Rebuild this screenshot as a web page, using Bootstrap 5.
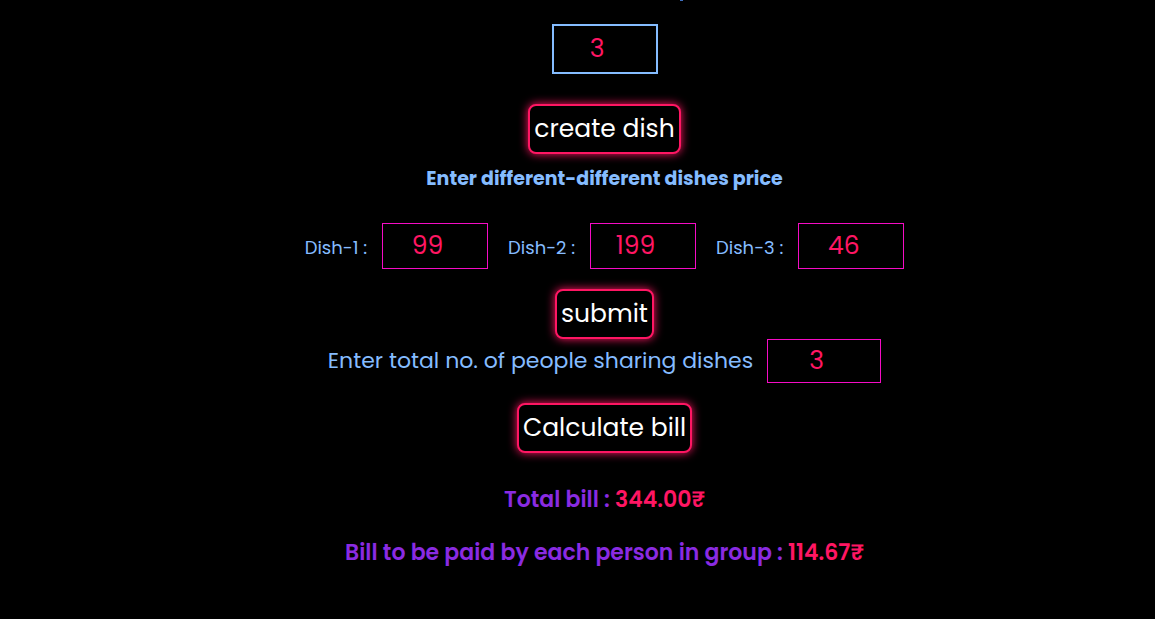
<!DOCTYPE html>
<html lang="en">
<head>
<meta charset="utf-8">
<meta name="viewport" content="width=device-width, initial-scale=1">
<title>Bill splitter</title>
<link href="https://cdn.jsdelivr.net/npm/bootstrap@5.3.0/dist/css/bootstrap.min.css" rel="stylesheet">
<style>
  body { background: #000; color: #85bcff; font-family: Poppins, Inter, "Open Sans", sans-serif; }
  .bill-page { padding: 24px 0 20px 54px; position: relative; }
  .bill-page::before { content: ""; position: absolute; top: 0; left: calc(50% + 102px); width: 3px; height: 1px; background: #3f6fc0; }
  .amount { background: #000; color: #ff1663; border: 1px solid #f50cc5; font-size: 25px; line-height: 40px; text-align: center; padding: 0; height: 46px; width: 106px; border-radius: 0; }
  .amount-count { border: 2px solid #85bcff; height: 50px; }
  .amount-people { width: 114px; height: 44px; }
  .glow-btn { background: #000; color: #fff; border: 2px solid #ff1663; border-radius: 8px; box-shadow: 0 0 10px #ff1663; font-size: 25px; line-height: 46px; padding: 0 4px; }
  .create-btn { margin-top: 30px; }
  .submit-btn, .calc-btn { margin-top: 20px; }
  .price-title { font-size: 19px; line-height: 29px; font-weight: 700; margin: 10px 0 30px; }
  .dish-label { font-size: 18px; line-height: 28px; padding-top: 3px; }
  .people-label { font-size: 22px; line-height: 32px; }
  .dish-row { gap: 20px; }
  .dish-pair { gap: 15px; }
  .people-pair { gap: 14px; }
  .result { color: #8a2be2; font-size: 22px; line-height: 33px; font-weight: 600; margin: 0 0 20px; }
  .results { margin-top: 30px; }
  .result output { color: #ff1663; }
</style>
</head>
<body>
<main class="bill-page d-flex flex-column align-items-center">
  <input type="number" class="amount amount-count" value="3" aria-label="Number of dishes">
  <button type="button" class="glow-btn create-btn">create dish</button>
  <h2 class="price-title">Enter different-different dishes price</h2>
  <div class="dish-row d-flex flex-wrap justify-content-center">
    <div class="dish-pair d-flex align-items-center"><label class="dish-label" for="d1">Dish-1 :</label><input id="d1" type="number" class="amount" value="99"></div>
    <div class="dish-pair d-flex align-items-center"><label class="dish-label" for="d2">Dish-2 :</label><input id="d2" type="number" class="amount" value="199"></div>
    <div class="dish-pair d-flex align-items-center"><label class="dish-label" for="d3">Dish-3 :</label><input id="d3" type="number" class="amount" value="46"></div>
  </div>
  <button type="button" class="glow-btn submit-btn">submit</button>
  <div class="people-pair d-flex align-items-center"><label class="people-label" for="people">Enter total no. of people sharing dishes</label><input id="people" type="number" class="amount amount-people" value="3"></div>
  <button type="button" class="glow-btn calc-btn">Calculate bill</button>
  <div class="results text-center">
    <p class="result">Total bill : <output>344.00₹</output></p>
    <p class="result">Bill to be paid by each person in group : <output>114.67₹</output></p>
  </div>
</main>
<script src="https://cdn.jsdelivr.net/npm/bootstrap@5.3.0/dist/js/bootstrap.bundle.min.js"></script>
</body>
</html>
